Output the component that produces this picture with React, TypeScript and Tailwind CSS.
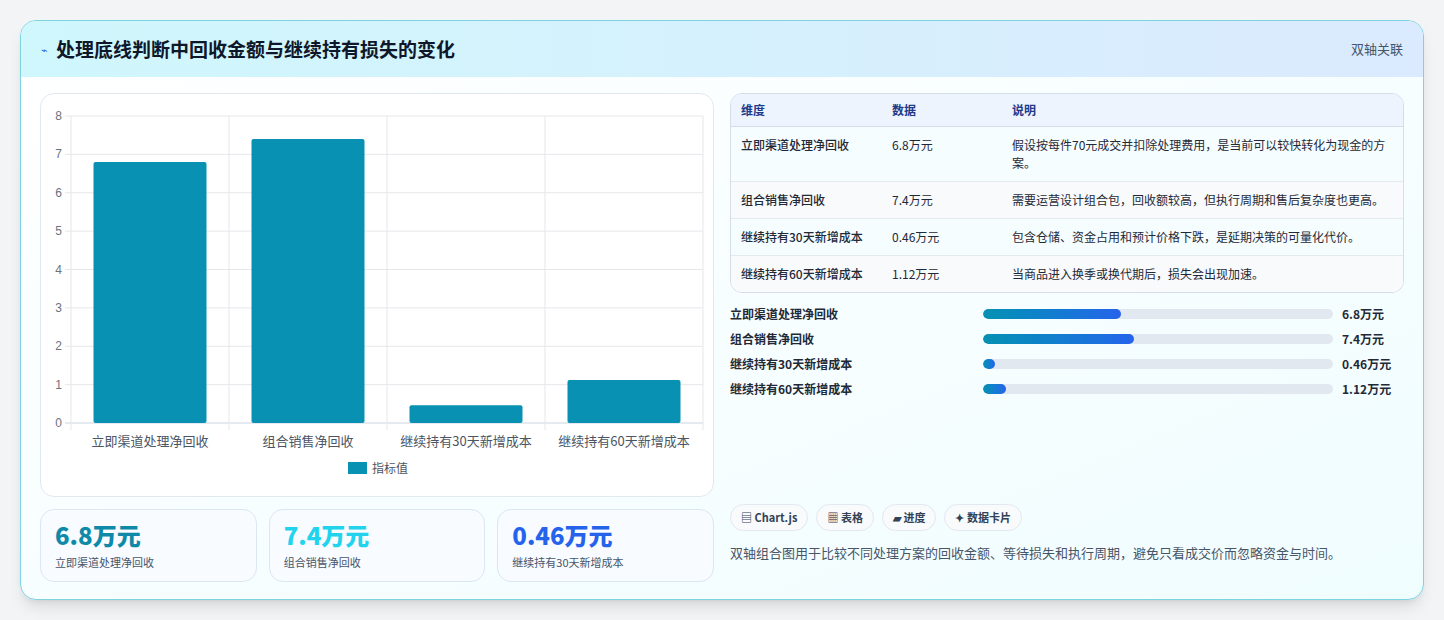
import React from "react";

const font = { fontFamily: '"Noto Sans CJK SC","Noto Sans",sans-serif' };
const cats = ["立即渠道处理净回收", "组合销售净回收", "继续持有30天新增成本", "继续持有60天新增成本"];
const vals = [6.8, 7.4, 0.46, 1.12];

function Chart() {
  const x0 = 30, x1 = 662, yTop = 22, yBot = 329;
  const u = (yBot - yTop) / 8;
  const cw = (x1 - x0) / 4;
  return (
    <svg width="674" height="403" viewBox="0 0 674 403" className="block">
      {[0,1,2,3,4,5,6,7,8].map(i => (
        <g key={i}>
          <line x1={x0 - 6} x2={x1} y1={yBot - i * u} y2={yBot - i * u} stroke={i === 0 ? "#cbd5e1" : "#e5e7eb"} />
          <text x={21} y={yBot - i * u + 4} fontSize="12" fill="#6b7280" textAnchor="end" style={{ fontFamily: '"Liberation Sans",sans-serif' }}>{i}</text>
        </g>
      ))}
      {[0,1,2,3,4].map(i => (
        <line key={i} x1={x0 + i * cw} x2={x0 + i * cw} y1={yTop} y2={yBot + 7} stroke="#e5e7eb" />
      ))}
      {vals.map((v, i) => {
        const h = v * u;
        const bx = x0 + i * cw + 22.5;
        return <rect key={i} x={bx} y={yBot - h} width={113} height={h} rx={2} fill="#0891b2" />;
      })}
      {cats.map((c, i) => (
        <text key={c} x={x0 + i * cw + cw / 2} y={352} fontSize="13" fill="#4b5563" textAnchor="middle" style={font}>{c}</text>
      ))}
      <rect x={307} y={368} width={19} height={12} fill="#0891b2" />
      <text x={331} y={379} fontSize="12" fill="#4b5563" style={font}>指标值</text>
    </svg>
  );
}

const rows = [
  ["立即渠道处理净回收", "6.8万元", "假设按每件70元成交并扣除处理费用，是当前可以较快转化为现金的方案。"],
  ["组合销售净回收", "7.4万元", "需要运营设计组合包，回收额较高，但执行周期和售后复杂度也更高。"],
  ["继续持有30天新增成本", "0.46万元", "包含仓储、资金占用和预计价格下跌，是延期决策的可量化代价。"],
  ["继续持有60天新增成本", "1.12万元", "当商品进入换季或换代期后，损失会出现加速。"],
];

export default function App() {
  return (
    <div className="w-[1444px] h-[620px] bg-[#f3f4f6] pt-[20px] pl-[20px]" style={font}>
      <div className="w-[1404px] h-[580px] rounded-[16px] border border-[#7dd3e0] bg-gradient-to-br from-white to-[#f0fdff] overflow-hidden shadow-lg">
        <div className="h-[56px] flex items-center justify-between px-[20px] bg-gradient-to-r from-[#cff7fc] to-[#dbeafe]">
          <div className="flex items-center gap-[8px]">
            <span className="text-[11px] text-[#2563eb]">⌁</span>
            <span className="text-[19px] font-bold text-[#0f172a]">处理底线判断中回收金额与继续持有损失的变化</span>
          </div>
          <span className="text-[13px] text-[#475569]">双轴关联</span>
        </div>
        <div className="flex gap-[16px] px-[19px] pt-[16px]">
          <div className="w-[674px] flex flex-col gap-[12px]">
            <div className="h-[404px] rounded-[14px] border border-[#e2e8f0] bg-white overflow-hidden"><Chart /></div>
            <div className="grid grid-cols-3 gap-[12px]">
              {[["6.8万元","立即渠道处理净回收","text-[#0e8aa8]"],["7.4万元","组合销售净回收","text-[#22d3ee]"],["0.46万元","继续持有30天新增成本","text-[#2563eb]"]].map(([v,l,c]) => (
                <div key={l} className="h-[73px] rounded-[14px] border border-[#dbe7f3] bg-[#f8fbff] px-[14px] pt-[10px]">
                  <div className={`text-[24px] font-extrabold leading-[30px] ${c}`}>{v}</div>
                  <div className="text-[11px] text-[#475569] mt-[4px]">{l}</div>
                </div>
              ))}
            </div>
          </div>
          <div className="w-[675px] flex flex-col">
            <div className="rounded-[12px] border border-[#d6dde8] bg-white overflow-hidden text-[12px] text-[#1f2937]">
              <div className="flex h-[33px] items-center bg-[#eef4fe] border-b border-[#d6dde8] text-[#1e3a8a] font-semibold">
                <div className="w-[161px] pl-[10px]">维度</div><div className="w-[120px]">数据</div><div className="flex-1">说明</div>
              </div>
              {rows.map((r, i) => (
                <div key={i} className={`flex py-[9px] leading-[18px] ${i < 3 ? "border-b border-[#e5e9f0]" : ""} ${i % 2 ? "bg-[#f8fafc]" : "bg-[#f5fdff]"}`}>
                  <div className="w-[161px] pl-[10px] font-medium">{r[0]}</div>
                  <div className="w-[120px]">{r[1]}</div>
                  <div className="flex-1 pr-[10px]">{r[2]}</div>
                </div>
              ))}
            </div>
            <div className="mt-[12px] flex flex-col gap-[7px] text-[12px] font-semibold text-[#1f2937]">
              {rows.map((r, i) => (
                <div key={i} className="flex items-center h-[18px]">
                  <div className="w-[253px]">{r[0]}</div>
                  <div className="w-[350px] h-[10px] rounded-full bg-[#e2e8f0] overflow-hidden">
                    <div className="h-full rounded-full bg-gradient-to-r from-[#0891b2] to-[#2563eb]" style={{ width: `${Math.max(vals[i] / 17.2 * 100, 3.5)}%` }} />
                  </div>
                  <div className="pl-[9px]">{r[1]}</div>
                </div>
              ))}
            </div>
            <div className="mt-auto pb-[20px]">
              <div className="flex gap-[8px] text-[11px] font-semibold text-[#334155]">
                {["▤ Chart.js","▦ 表格","▰ 进度","✦ 数据卡片"].map(t => (
                  <span key={t} className="h-[27px] px-[10px] flex items-center rounded-full border border-[#e2e8f0] bg-[#f8fafc]">{t}</span>
                ))}
              </div>
              <div className="mt-[12px] text-[13px] text-[#475569]">双轴组合图用于比较不同处理方案的回收金额、等待损失和执行周期，避免只看成交价而忽略资金与时间。</div>
            </div>
          </div>
        </div>
      </div>
    </div>
  );
}
